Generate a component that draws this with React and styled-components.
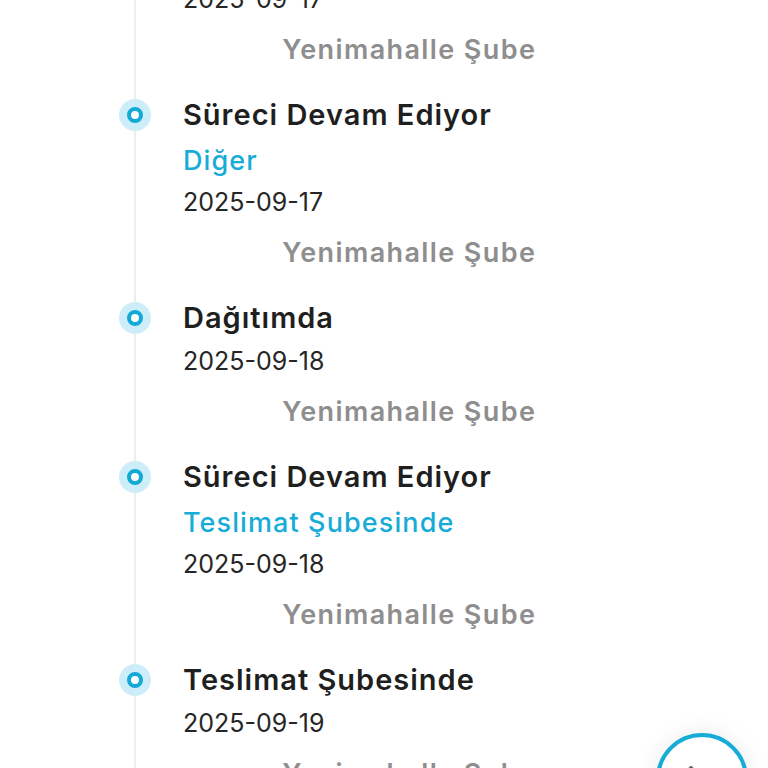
import React from "react";
import styled, { createGlobalStyle } from "styled-components";

const Global = createGlobalStyle`
  html, body { margin: 0; padding: 0; background: #ffffff; overflow: hidden; height: 768px; }
  body { font-family: "Inter", "Noto Sans", sans-serif; color: #222222; }
`;

const Timeline = styled.ol`
  position: relative;
  list-style: none;
  margin: -63px 0 0 0;
  padding: 0 0 0 103px;
  display: flex;
  flex-direction: column;
  gap: 29px;
  &::before {
    content: "";
    position: absolute;
    left: 134px;
    top: 0;
    bottom: -200px;
    width: 2px;
    background: #eceef1;
  }
`;

const Item = styled.li`
  position: relative;
  display: grid;
  grid-template-columns: 64px 352px;
  column-gap: 16px;
`;

const Rail = styled.div`
  height: 38px;
  display: flex;
  align-items: center;
  justify-content: center;
`;

const Dot = styled.span`
  width: 32px;
  height: 32px;
  border-radius: 50%;
  background: #cdeef9;
  display: flex;
  align-items: center;
  justify-content: center;
  &::after {
    content: "";
    width: 8px;
    height: 8px;
    border-radius: 50%;
    background: #ffffff;
    border: 4px solid #12a9d6;
  }
`;

const Content = styled.div`
  display: flex;
  flex-direction: column;
`;

const Title = styled.div`
  font-size: 29px;
  font-weight: 600;
  letter-spacing: 1px;
  line-height: 38px;
  color: #1f1f1f;
  white-space: nowrap;
`;

const Sub = styled.div`
  margin-top: 10px;
  font-size: 27px;
  font-weight: 500;
  letter-spacing: 1.1px;
  line-height: 34px;
  color: #17acd7;
  white-space: nowrap;
`;

const DateText = styled.div`
  margin-top: 7px;
  font-size: 25px;
  font-weight: 400;
  line-height: 34px;
  color: #262626;
`;

const Branch = styled.div`
  margin-top: 17px;
  margin-right: -1.4px;
  font-size: 27px;
  font-weight: 600;
  letter-spacing: 1.4px;
  line-height: 34px;
  color: #8e8e8e;
  text-align: right;
  white-space: nowrap;
`;

const Fab = styled.button`
  position: fixed;
  right: 20px;
  bottom: -57px;
  width: 92px;
  height: 92px;
  border-radius: 50%;
  border: 4px solid #17acd7;
  background: #ffffff;
  box-shadow: 0 0 24px rgba(0, 0, 0, 0.08);
  padding: 0;
  display: flex;
  align-items: center;
  justify-content: center;
  color: #555555;
`;

const events = [
  { title: "Dağıtımda", date: "2025-09-17" },
  { title: "Süreci Devam Ediyor", sub: "Diğer", date: "2025-09-17" },
  { title: "Dağıtımda", date: "2025-09-18" },
  { title: "Süreci Devam Ediyor", sub: "Teslimat Şubesinde", date: "2025-09-18" },
  { title: "Teslimat Şubesinde", date: "2025-09-19" },
];

export default function App() {
  return (
    <>
      <Global />
      <Timeline>
        {events.map((e, i) => (
          <Item key={i}>
            <Rail>
              <Dot />
            </Rail>
            <Content>
              <Title>{e.title}</Title>
              {e.sub && <Sub>{e.sub}</Sub>}
              <DateText>{e.date}</DateText>
              <Branch>Yenimahalle Şube</Branch>
            </Content>
          </Item>
        ))}
      </Timeline>
      <Fab aria-label="Yukarı">
        <svg width="30" height="30" viewBox="0 0 24 24" fill="none" stroke="#666" strokeWidth="2" strokeLinecap="round" strokeLinejoin="round" style={{ marginLeft: -22, marginTop: -6 }}>
          <path d="M12 19V5" />
          <path d="M5 12l7-7 7 7" />
        </svg>
      </Fab>
    </>
  );
}
